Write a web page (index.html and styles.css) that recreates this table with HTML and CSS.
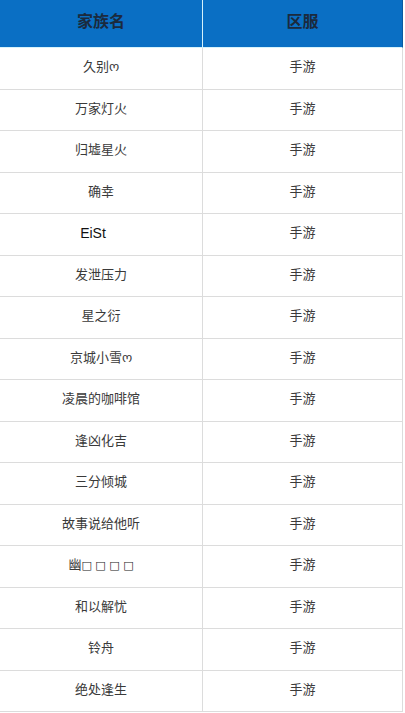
FILE: index.html
```html
<!DOCTYPE html>
<html lang="zh">
<head>
<meta charset="utf-8">
<link rel="stylesheet" href="styles.css">
</head>
<body>
<table class="clan-table">
  <thead>
    <tr><th>家族名</th><th>区服</th></tr>
  </thead>
  <tbody>
    <tr><td>久别ო</td><td>手游</td></tr>
    <tr><td>万家灯火</td><td>手游</td></tr>
    <tr><td>归墟星火</td><td>手游</td></tr>
    <tr><td>确幸</td><td>手游</td></tr>
    <tr><td class="latin">EiSt</td><td>手游</td></tr>
    <tr><td>发泄压力</td><td>手游</td></tr>
    <tr><td>星之衍</td><td>手游</td></tr>
    <tr><td>京城小雪ო</td><td>手游</td></tr>
    <tr><td>凌晨的咖啡馆</td><td>手游</td></tr>
    <tr><td>逢凶化吉</td><td>手游</td></tr>
    <tr><td>三分倾城</td><td>手游</td></tr>
    <tr><td>故事说给他听</td><td>手游</td></tr>
    <tr><td>幽<span class="tofu">□ □ □ □</span></td><td>手游</td></tr>
    <tr><td>和以解忧</td><td>手游</td></tr>
    <tr><td>铃舟</td><td>手游</td></tr>
    <tr><td>绝处逢生</td><td>手游</td></tr>
  </tbody>
</table>
</body>
</html>
```

FILE: styles.css
```css
html, body {
  margin: 0;
  padding: 0;
  background: #ffffff;
}

.clan-table {
  width: 403px;
  border-collapse: separate;
  border-spacing: 0;
  table-layout: fixed;
  font-family: "Liberation Sans", "Noto Sans CJK SC", sans-serif;
}

.clan-table th {
  height: 44px;
  padding: 0 0 3px 0;
  background: #0a6fc4;
  color: #1b2a3d;
  font-size: 16px;
  font-weight: bold;
  line-height: 1;
  text-align: center;
  vertical-align: middle;
  border-bottom: 1px solid #d6f2fb;
  border-right: 1px solid #d6f2fb;
}

.clan-table th:last-child {
  border-right: 1px solid #0a5aa0;
}

.clan-table td {
  height: 37.5px;
  padding: 0 0 3px 0;
  color: #3a3a3a;
  font-size: 13px;
  line-height: 1;
  text-align: center;
  vertical-align: middle;
  border-bottom: 1px solid #dcdcdc;
  border-right: 1px solid #dcdcdc;
}

.clan-table th:first-child,
.clan-table td:first-child {
  width: 202px;
}

.clan-table td.latin {
  color: #111;
  font-size: 14px;
  padding-right: 16px;
}

.tofu {
  font-family: "DejaVu Sans", sans-serif;
  font-size: 11px;
  color: #222;
}
```
